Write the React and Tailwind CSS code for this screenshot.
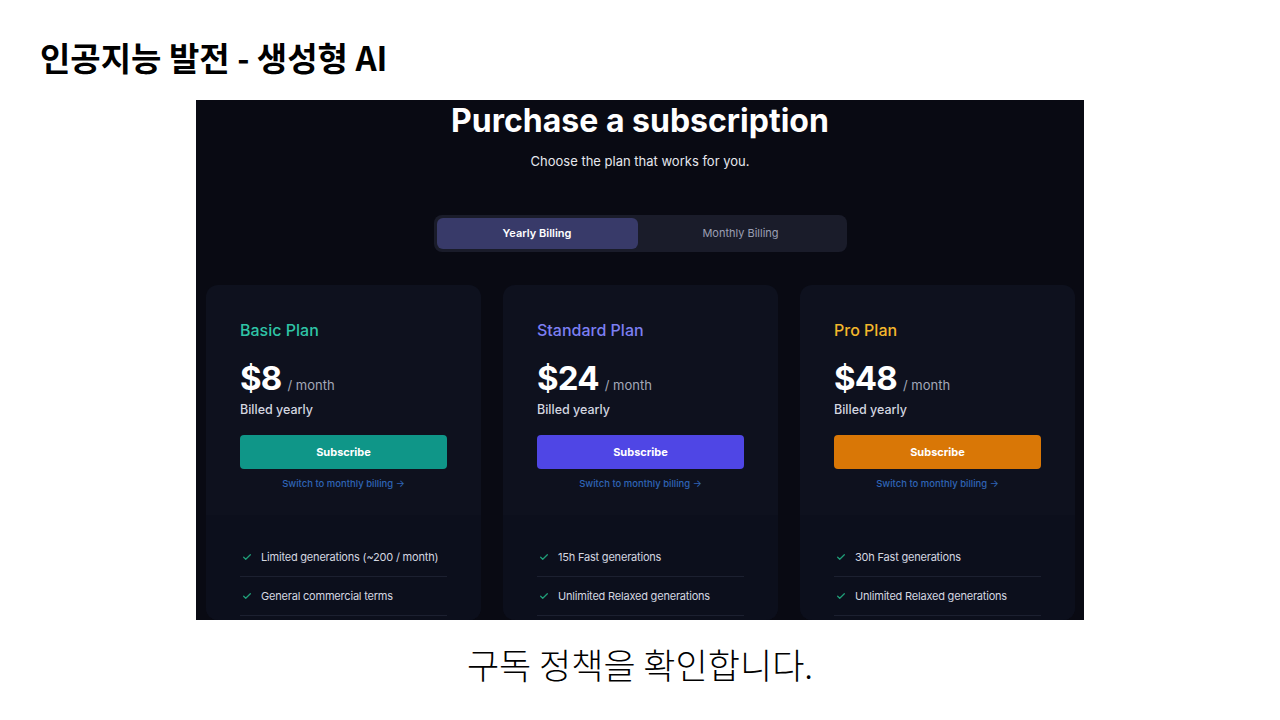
import React from "react";

const plans = [
  {
    name: "Basic Plan",
    nameColor: "text-[#2fc4a6]",
    price: "$8",
    btn: "bg-[#0f9688]",
    features: ["Limited generations (~200 / month)", "General commercial terms"],
  },
  {
    name: "Standard Plan",
    nameColor: "text-[#7c7ff2]",
    price: "$24",
    btn: "bg-[#4f46e5]",
    features: ["15h Fast generations", "Unlimited Relaxed generations"],
  },
  {
    name: "Pro Plan",
    nameColor: "text-[#f3b72c]",
    price: "$48",
    btn: "bg-[#d97706]",
    features: ["30h Fast generations", "Unlimited Relaxed generations"],
  },
];

function Check() {
  return (
    <svg width="10" height="10" viewBox="0 0 24 24" fill="none" stroke="#1f9e78" strokeWidth="3" strokeLinecap="round" strokeLinejoin="round">
      <path d="M4 12.5l5 5L20 6.5" />
    </svg>
  );
}

function Card({ p }) {
  return (
    <div className="w-[275px] shrink-0 rounded-xl bg-[#0e111e] overflow-hidden flex flex-col">
      <div className="px-[34px] pt-[33px] pb-[24px]">
        <div className={`text-[16px] leading-[24px] font-medium ${p.nameColor}`}>{p.name}</div>
        <div className="mt-[16px] flex items-baseline gap-[6px]">
          <span className="text-[33px] leading-[40px] font-bold text-white tracking-tight">{p.price}</span>
          <span className="text-[13px] text-[#a3a8b8]">/ month</span>
        </div>
        <div className="mt-[3px] text-[12.5px] leading-[18px] font-medium text-[#d4d7e0]">Billed yearly</div>
        <div className={`mt-[16px] h-[34px] rounded-[4px] ${p.btn} flex items-center justify-center text-[11px] font-bold text-white`}>
          Subscribe
        </div>
        <div className="mt-[8px] text-center text-[9.5px] leading-[14px] font-medium text-[#2f64b5]">
          Switch to monthly billing →
        </div>
      </div>
      <div className="flex-1 bg-[#0c0f1c] px-[34px] pt-[23px]">
        {p.features.map((f) => (
          <div key={f} className="h-[39px] border-b border-[#1c2030] flex items-center gap-[9px] pl-[2px]">
            <Check />
            <span className="text-[11px] whitespace-nowrap tracking-[-0.2px] text-[#d4d7e0]">{f}</span>
          </div>
        ))}
      </div>
    </div>
  );
}

export default function App() {
  return (
    <div
      className="w-[1280px] h-[720px] bg-white flex flex-col"
      style={{ fontFamily: "Inter, 'Noto Sans CJK KR', sans-serif" }}
    >
      <div className="h-[100px] pl-[40px] pt-[16px] flex items-center">
        <h1
          className="text-[33px] font-bold text-black"
          style={{ fontFamily: "'Noto Sans CJK KR', sans-serif" }}
        >
          인공지능 발전 - 생성형 AI
        </h1>
      </div>
      <div className="mx-auto w-[888px] h-[520px] bg-[#090a13] overflow-hidden flex flex-col items-center">
        <div className="mt-[1px] text-[32px] leading-[40px] font-bold text-white">
          Purchase a subscription
        </div>
        <div className="mt-[10px] text-[13px] leading-[20px] text-[#e5e7ee]">Choose the plan that works for you.</div>
        <div className="mt-[44px] w-[413px] h-[37px] rounded-lg bg-[#1a1c2a] p-[3px] flex">
          <div className="w-[201px] h-full rounded-md bg-[#383a69] flex items-center justify-center text-[11px] font-semibold text-white">
            Yearly Billing
          </div>
          <div className="flex-1 h-full flex items-center justify-center text-[11px] text-[#9a9fb3]">
            Monthly Billing
          </div>
        </div>
        <div className="mt-[33px] w-full pl-[10px] flex gap-[22px] flex-1 items-stretch">
          {plans.map((p) => (
            <Card key={p.name} p={p} />
          ))}
        </div>
      </div>
      <div className="flex-1 flex items-center justify-center pb-[12px]">
        <div
          className="text-[35px] text-black"
          style={{ fontFamily: "'Noto Sans CJK KR', sans-serif", fontWeight: 300 }}
        >
          구독 정책을 확인합니다.
        </div>
      </div>
    </div>
  );
}
